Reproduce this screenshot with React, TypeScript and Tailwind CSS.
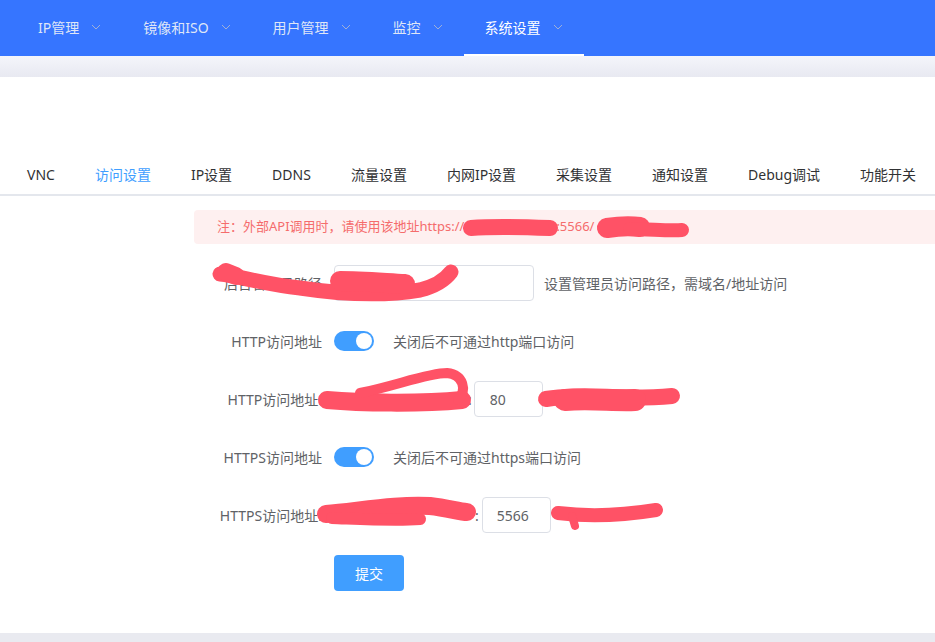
import React from "react";

const FONT = { fontFamily: '"Noto Sans", "Noto Sans CJK SC", sans-serif' };

const navItems = ["IP管理", "镜像和ISO", "用户管理", "监控", "系统设置"];
const tabs = ["VNC", "访问设置", "IP设置", "DDNS", "流量设置", "内网IP设置", "采集设置", "通知设置", "Debug调试", "功能开关"];

function Chevron() {
  return (
    <svg width="10" height="6" viewBox="0 0 10 6" fill="none">
      <polyline points="1,1 5,5 9,1" stroke="#9fb0d6" strokeWidth="1" />
    </svg>
  );
}

function Switch() {
  return (
    <div className="relative w-[40px] h-[20px] rounded-full bg-[#409eff]">
      <div className="absolute top-[2px] right-[2px] w-[16px] h-[16px] rounded-full bg-white" />
    </div>
  );
}

function Row({ label, children }: { label: string; children?: React.ReactNode }) {
  return (
    <div className="flex items-center h-[36px] mb-[22px]">
      <div className="w-[140px] shrink-0 pr-[12px] text-right text-[14px] text-[#606266] whitespace-nowrap">{label}</div>
      <div className="flex items-center">{children}</div>
    </div>
  );
}

export default function App() {
  const red = "#ff5266";
  return (
    <div className="relative w-[935px] h-[642px] overflow-hidden bg-white" style={FONT}>
      {/* header */}
      <div className="h-[56px] bg-[#3675ff] flex items-stretch pl-[17px]">
        {navItems.map((n, i) => {
          const active = i === navItems.length - 1;
          return (
            <div
              key={n}
              className={
                "flex items-center gap-[12px] pl-[21px] pr-[21px] border-b-2 whitespace-nowrap " +
                (active ? "border-white text-white" : "border-transparent text-[#dfe6f7]")
              }
            >
              <span className="text-[14px]">{n}</span>
              <Chevron />
            </div>
          );
        })}
      </div>
      <div className="h-[21px] bg-gradient-to-b from-[#f4f5fb] to-[#e8e9f1]" />

      {/* main white */}
      <div className="bg-white pb-[42px]">
        <div className="h-[78px]" />
        <div className="h-[41px] border-b-2 border-[#e4e7ed] flex items-stretch pl-[27px] overflow-hidden">
          {tabs.map((t, i) => {
            const active = i === 1;
            const first = i === 0;
            return (
              <div
                key={t}
                className={
                  "relative shrink-0 whitespace-nowrap flex items-center text-[14px] " +
                  (first ? "pl-0 pr-[20px] " : "px-[20px] ") +
                  (active ? "text-[#409eff]" : "text-[#303133]")
                }
              >
                {t}
                {active && <div className="absolute left-[20px] right-[20px] -bottom-[2px] h-[2px] bg-[#409eff]" />}
              </div>
            );
          })}
        </div>

        <div className="pl-[194px]">
          <div className="mt-[14px] h-[34px] bg-[#fef0f0] rounded-l-[4px] flex items-center pl-[23px] text-[13px] text-[#f56c6c] whitespace-nowrap">
            注：外部API调用时，请使用该地址https://<span className="inline-block w-[92px]" />:5566/
          </div>

          <div className="mt-[21px] -ml-[194px] pl-[194px]">
            <Row label="后台管理员路径">
              <div className="w-[200px] h-[36px] border border-[#dcdfe6] rounded-[4px]" />
              <span className="ml-[10px] text-[14px] text-[#606266] whitespace-nowrap">设置管理员访问路径，需域名/地址访问</span>
            </Row>
            <Row label="HTTP访问地址">
              <Switch />
              <span className="ml-[19px] text-[14px] text-[#606266] whitespace-nowrap">关闭后不可通过http端口访问</span>
            </Row>
            <Row label="HTTP访问地址:">
              <span className="w-[134px]" />
              <span className="text-[14px] text-[#606266]">:</span>
              <div className="ml-[2px] w-[69px] h-[36px] border border-[#dcdfe6] rounded-[4px] flex items-center pl-[15px] text-[14px] text-[#606266]">80</div>
            </Row>
            <Row label="HTTPS访问地址">
              <Switch />
              <span className="ml-[19px] text-[14px] text-[#606266] whitespace-nowrap">关闭后不可通过https端口访问</span>
            </Row>
            <Row label="HTTPS访问地址:">
              <span className="w-[141px]" />
              <span className="text-[14px] text-[#606266]">:</span>
              <div className="ml-[3px] w-[69px] h-[36px] border border-[#dcdfe6] rounded-[4px] flex items-center pl-[14px] text-[14px] text-[#606266]">5566</div>
            </Row>
            <div className="flex">
              <div className="w-[140px]" />
              <button className="w-[70px] h-[36px] bg-[#409eff] rounded-[4px] text-white text-[14px]">提交</button>
            </div>
          </div>
        </div>
      </div>
      <div className="h-[20px] bg-[#e9eaf0]" />

      {/* redaction scribbles */}
      <svg className="absolute inset-0 pointer-events-none" width="935" height="642" viewBox="0 0 935 642" fill="none" strokeLinecap="round" strokeLinejoin="round">
        <g stroke={red}>
          <path d="M471 228 C 495 226, 525 227, 550 228" strokeWidth="16" />
          <path d="M607 228 C 620 226, 632 226, 640 227" strokeWidth="20" />
          <path d="M630 229 C 650 229, 668 231, 682 230" strokeWidth="14" />
          <path d="M220 274 C 240 276, 262 284, 300 288 C 340 294, 385 296, 420 290 C 440 285, 448 276, 451 272" strokeWidth="15" />
          <path d="M226 272 L 236 276" strokeWidth="18" />
          <path d="M340 281 C 360 281, 385 283, 405 284" strokeWidth="20" />
          <path d="M327 400 C 360 403, 420 404, 462 400" strokeWidth="18" />
          <path d="M360 393 C 395 386, 428 373, 447 373 C 464 375, 467 390, 458 400" strokeWidth="10" />
          <path d="M546 399 C 580 393, 620 401, 672 396" strokeWidth="16" />
          <path d="M565 400 C 590 398, 615 401, 635 400" strokeWidth="22" />
          <path d="M326 514 C 360 511, 398 504, 430 506 C 448 508, 460 512, 467 512" strokeWidth="18" />
          <path d="M332 518 C 360 519, 395 521, 420 519" strokeWidth="12" />
          <path d="M558 513 C 590 517, 625 515, 656 510" strokeWidth="14" />
          <path d="M572 516 L 575 526" strokeWidth="8" />
        </g>
      </svg>
    </div>
  );
}
